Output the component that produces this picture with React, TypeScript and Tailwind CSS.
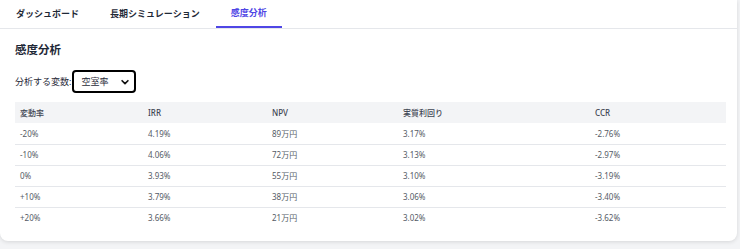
import React from "react";

const rows = [
  ["-20%", "4.19%", "89万円", "3.17%", "-2.76%"],
  ["-10%", "4.06%", "72万円", "3.13%", "-2.97%"],
  ["0%", "3.93%", "55万円", "3.10%", "-3.19%"],
  ["+10%", "3.79%", "38万円", "3.06%", "-3.40%"],
  ["+20%", "3.66%", "21万円", "3.02%", "-3.62%"],
];

const headers = ["変動率", "IRR", "NPV", "実質利回り", "CCR"];
const widths = ["w-[128px]", "w-[124px]", "w-[131px]", "w-[192px]", "w-[136px]"];

export default function App() {
  return (
    <div
      className="w-[740px] h-[249px] bg-[#f3f4f6] overflow-hidden"
      style={{ fontFamily: '"Noto Sans", "Noto Sans CJK JP", sans-serif' }}
    >
      <div className="w-[737px] h-[241px] bg-white rounded-b-[8px] shadow-[0_1px_4px_rgba(0,0,0,0.12)]">
        <div className="flex h-[29px] border-b border-[#e5e7eb] pl-[1px]">
          <div className="px-[15px] h-[28px] flex items-center text-[9px] font-bold text-[#1f2937]">
            ダッシュボード
          </div>
          <div className="px-[15px] ml-[1px] h-[28px] flex items-center text-[9px] font-bold text-[#1f2937]">
            長期シミュレーション
          </div>
          <div className="px-[15px] ml-[1px] h-[28px] flex items-center text-[9px] font-bold text-[#4f46e5] border-b-2 border-[#4f46e5]">
            感度分析
          </div>
        </div>
        <div className="px-[15px]">
          <div className="mt-[13px] text-[11.5px] font-bold text-[#1f2937] leading-[16px]">感度分析</div>
          <div className="mt-[12px] flex items-center h-[23px]">
            <span className="text-[9px] text-[#1f2937]">分析する変数:</span>
            <div className="ml-[1px] w-[64px] h-[23px] border-2 border-black rounded-[4px] flex items-center justify-between pl-[7px] pr-[4px]">
              <span className="text-[9px] text-[#1f2937]">空室率</span>
              <svg width="10" height="10" viewBox="0 0 24 24" fill="none" stroke="#111" strokeWidth="4" strokeLinecap="round" strokeLinejoin="round">
                <path d="M5 9l7 7 7-7" />
              </svg>
            </div>
          </div>
          <table className="mt-[9px] w-[711px] border-collapse text-[8px] text-[#555b66]">
            <thead>
              <tr className="bg-[#f3f4f6] h-[21px]">
                {headers.map((h, i) => (
                  <th key={h} className={`${widths[i]} text-left font-medium text-[#3f4653] pl-[5px]`}>
                    {h}
                  </th>
                ))}
              </tr>
            </thead>
            <tbody>
              {rows.map((r, ri) => (
                <tr key={ri} className={`h-[21px] ${ri < rows.length - 1 ? "border-b border-[#e5e7eb]" : ""}`}>
                  {r.map((c, ci) => (
                    <td key={ci} className="pl-[5px] pt-[1px]">
                      {c}
                    </td>
                  ))}
                </tr>
              ))}
            </tbody>
          </table>
        </div>
      </div>
    </div>
  );
}
